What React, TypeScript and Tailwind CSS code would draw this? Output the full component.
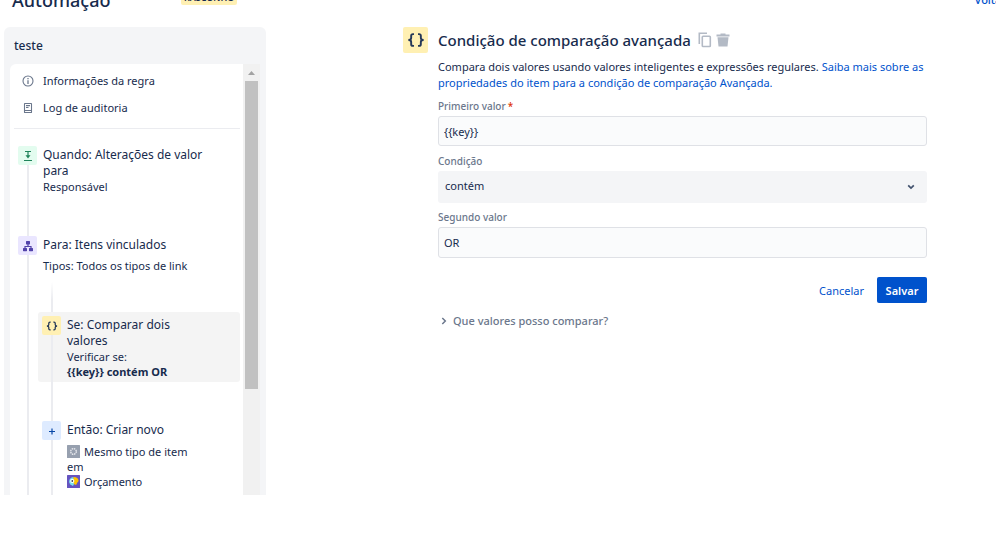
import { useState, type ReactNode } from 'react';

function BracesIcon({ className }: { className: string }) {
  return (
    <svg viewBox="0 0 16 16" className={className} fill="none" stroke="#253858" strokeWidth="1.7" aria-hidden="true">
      <path d="M6.200 2.800H5.300Q3.700 2.800 3.700 4.300V6.300Q3.700 8 1.200 8Q3.700 8 3.700 9.700V11.700Q3.700 13.200 5.300 13.200H6.200" />
      <path d="M9.800 2.800H10.700Q12.300 2.800 12.300 4.300V6.300Q12.300 8 14.800 8Q12.300 8 12.300 9.700V11.700Q12.300 13.200 10.700 13.200H9.800" />
    </svg>
  );
}

function InfoIcon() {
  return (
    <svg viewBox="0 0 12 12" className="size-3" fill="none" stroke="#6b778c" strokeWidth="1.1" aria-hidden="true">
      <circle cx="6" cy="6" r="5" />
      <path d="M6 5.300V9M6 3V4.300" strokeWidth="1.300" />
    </svg>
  );
}

function LogIcon() {
  return (
    <svg viewBox="0 0 12 12" className="size-3" fill="none" stroke="#6b778c" strokeWidth="1.1" aria-hidden="true">
      <rect x="2.500" y="1.500" width="7" height="9" rx="0.300" />
      <path d="M2.500 8.500H9.500M4 3.600H8M4 5.500H6.500" />
    </svg>
  );
}

function FieldChangeIcon() {
  return (
    <svg viewBox="0 0 12 12" className="size-3" fill="none" stroke="#1f845a" strokeWidth="1.200" aria-hidden="true">
      <path d="M3 1.500H9M2 10.500H10M6 1.500V7" />
      <path d="M3.500 5.300H8.500L6 8.500Z" fill="#1f845a" stroke="none" />
    </svg>
  );
}

function BranchIcon() {
  return (
    <svg viewBox="0 0 12 12" className="size-3" fill="none" stroke="#5243aa" strokeWidth="1.200" aria-hidden="true">
      <path d="M6 4V6.500M3 9V6.500H9V9" />
      <g fill="#5243aa" stroke="none">
        <rect x="4" y="1" width="4" height="3.400" rx="0.600" />
        <rect x="1" y="8" width="4" height="3.200" rx="0.600" />
        <rect x="7" y="8" width="4" height="3.200" rx="0.600" />
      </g>
    </svg>
  );
}

function PlusIcon() {
  return (
    <svg viewBox="0 0 12 12" className="size-3" stroke="#0747a6" strokeWidth="1.200" aria-hidden="true">
      <path d="M3 6.500H9M6 3.500V9.500" />
    </svg>
  );
}

function IssueTypeIcon() {
  return (
    <svg viewBox="0 0 13 13" className="size-[13px] shrink-0" aria-hidden="true">
      <rect width="13" height="13" rx="0.500" fill="#97a0af" />
      <circle cx="6.500" cy="6.500" r="2.800" fill="none" stroke="#ebecf0" strokeWidth="1.300" strokeDasharray="1.500 0.700" />
    </svg>
  );
}

function ProjectIcon() {
  return (
    <svg viewBox="0 0 13 13" className="size-[13px] shrink-0" aria-hidden="true">
      <rect width="13" height="13" rx="0.500" fill="#6554c0" />
      <path d="M6.500 2A4.500 4.500 0 0 0 3.200 9.500L6 11L7.500 8Z" fill="#79e2f2" />
      <path d="M6.500 2Q11.300 2 11.600 6Q10 7.500 9.300 9.800Q6.500 10 6.500 7Z" fill="#ffc400" />
      <circle cx="5.300" cy="6" r="2.100" fill="#fff" />
      <circle cx="5.300" cy="6" r="0.900" fill="#344563" />
    </svg>
  );
}

interface StepProps {
  icon: ReactNode;
  tone: string;
  title: string;
  className?: string;
  children: ReactNode;
}

function Step({ icon, tone, title, className = '', children }: StepProps) {
  return (
    <div className={`flex gap-px ${className}`}>
      <div className="flex w-[19px] shrink-0 flex-col">
        <span className={`flex size-[19px] items-center justify-center rounded-[2px] ${tone}`}>{icon}</span>
        <span className="ml-[9px] w-[2px] flex-1 bg-[#ebecf0]" />
      </div>
      <div className="min-w-0 flex-1 pt-px">
        <h3 className="max-w-[175px] pl-[5px] text-[12px] leading-4">{title}</h3>
        {children}
      </div>
    </div>
  );
}

function RulePanel() {
  return (
    <aside className="w-[262px] shrink-0 rounded-t-md bg-[#f4f5f7] px-[6px]">
      <h2 className="px-1 pt-[10px] pb-[9px] text-[12px] leading-[18px] font-medium">teste</h2>
      <div className="flex overflow-hidden rounded-tl-md bg-white">
        <div className="min-w-0 flex-1 pt-[3px]">
          <nav className="mr-[3px] ml-1 border-b border-[#ebecf0] pb-[7px]">
            <a href="#info" className="flex h-[27px] items-center gap-[9px] pl-2">
              <InfoIcon />
              Informações da regra
            </a>
            <a href="#audit" className="flex h-[27px] items-center gap-[9px] pl-2">
              <LogIcon />
              Log de auditoria
            </a>
          </nav>

          <div className="pt-[17px] pr-[3px] pl-2">
            <Step icon={<FieldChangeIcon />} tone="bg-[#e3fcef]" title="Quando: Alterações de valor para">
              <p className="pb-[42px] pl-[5px]">Responsável</p>
            </Step>

            <Step icon={<BranchIcon />} tone="bg-[#eae6ff]" title="Para: Itens vinculados">
              <p className="pt-[5px] pb-[9px] pl-[5px]">Tipos: Todos os tipos de link</p>
              <div className="ml-[13px] h-[30px] w-[2px] bg-linear-to-b from-white to-[#ebecf0] to-60%" />
              <Step
                icon={<BracesIcon className="size-3" />}
                tone="bg-[#fff0b3]"
                title="Se: Comparar dois valores"
                className="rounded-[3px] bg-[#f4f4f4] pt-1 pl-1 *:last:max-w-[140px]"
              >
                <div className="pb-[3px] pl-[5px]">
                  <p>Verificar se:</p>
                  <p className="font-bold">{'{{key}} contém OR'}</p>
                </div>
              </Step>
              <div className="ml-[13px] h-[39px] w-[2px] bg-[#ebecf0]" />
              <Step icon={<PlusIcon />} tone="bg-[#deebff]" title="Então: Criar novo" className="pl-1">
                <div className="pt-[6px] pb-[6px] pl-[5px]">
                  <p className="flex items-center gap-1">
                    <IssueTypeIcon />
                    Mesmo tipo de item
                  </p>
                  <p>em</p>
                  <p className="flex items-center gap-1">
                    <ProjectIcon />
                    Orçamento
                  </p>
                </div>
              </Step>
            </Step>
          </div>
        </div>

        <div className="flex w-[17px] flex-col items-center bg-[#f1f1f1]" aria-hidden="true">
          <span className="flex h-[17px] items-center">
            <svg viewBox="0 0 7 4" className="h-1 w-[7px]" fill="#a3a3a3">
              <path d="M0 4L3.500 0L7 4Z" />
            </svg>
          </span>
          <span className="h-[308px] w-[13px] bg-[#c1c1c1]" />
        </div>
      </div>
    </aside>
  );
}

const labelStyle = 'block text-[10px] leading-[15px] font-medium text-[#6b778c]';
const inputStyle = 'mt-[2px] block w-full rounded-[3px] border border-[#dfe1e6] bg-[#fafbfc] px-[5px] outline-none';

function ConditionForm() {
  const [first, setFirst] = useState('{{key}}');
  const [operator, setOperator] = useState('contém');
  const [second, setSecond] = useState('OR');

  return (
    <main className="flex min-w-0 flex-1 gap-[10px] pr-[69px] pl-[137px]">
      <span className="flex h-[26px] w-[25px] shrink-0 items-center justify-center rounded-[2px] bg-[#fff0b3]">
        <BracesIcon className="size-[18px]" />
      </span>
      <div className="min-w-0 flex-1">
        <div className="flex h-[26px] items-center">
          <h1 className="text-[15px] font-medium">Condição de comparação avançada</h1>
          <button type="button" aria-label="Duplicar" className="ml-[6px]">
            <svg viewBox="0 0 16 16" className="size-4" fill="none" stroke="#b3bac5" strokeWidth="1.600">
              <path d="M2.300 12V1.300H10" />
              <rect x="5.300" y="4.300" width="8" height="10.200" rx="0.800" />
            </svg>
          </button>
          <button type="button" aria-label="Excluir" className="ml-[2px]">
            <svg viewBox="0 0 16 16" className="size-4" fill="#b3bac5">
              <path d="M5.500 1.500H10.500V2.500H14.500V4.500H1.500V2.500H5.500ZM2.500 5.300H13.500L12.500 14.500H3.500Z" />
            </svg>
          </button>
        </div>
        <p className="mt-[6px] leading-4">
          Compara dois valores usando valores inteligentes e expressões regulares.{' '}
          <a href="#docs" className="text-[#0052cc]">
            Saiba mais sobre as propriedades do item para a condição de comparação Avançada.
          </a>
        </p>

        <form onSubmit={(e) => e.preventDefault()}>
          <label htmlFor="first" className={`mt-2 ${labelStyle}`}>
            Primeiro valor<span className="pl-[2px] text-[#de350b]">*</span>
          </label>
          <input
            id="first"
            value={first}
            onChange={(e) => setFirst(e.target.value)}
            className={`h-[30px] ${inputStyle}`}
          />

          <label htmlFor="operator" className={`mt-2 ${labelStyle}`}>
            Condição
          </label>
          <div className="relative mt-[2px]">
            <select
              id="operator"
              value={operator}
              onChange={(e) => setOperator(e.target.value)}
              className="block h-8 w-full appearance-none rounded-[3px] bg-[#f4f5f7] px-[7px] pb-[3px] outline-none"
            >
              <option>contém</option>
            </select>
            <svg
              viewBox="0 0 8 6"
              className="pointer-events-none absolute top-[13px] right-3 h-[6px] w-2"
              fill="none"
              stroke="#42526e"
              strokeWidth="1.700"
            >
              <path d="M1.200 1.300L4 4.100L6.800 1.300" />
            </svg>
          </div>

          <label htmlFor="second" className={`mt-[7px] ${labelStyle}`}>
            Segundo valor
          </label>
          <input
            id="second"
            value={second}
            onChange={(e) => setSecond(e.target.value)}
            className={`h-[31px] ${inputStyle}`}
          />

          <div className="mt-[19px] flex justify-end gap-[3px]">
            <button type="button" className="h-[26px] px-[10px] text-[#0052cc]">
              Cancelar
            </button>
            <button type="submit" className="h-[26px] w-[50px] rounded-[2px] bg-[#0052cc] font-semibold text-white">
              Salvar
            </button>
          </div>
        </form>

        <button type="button" className="mt-[10px] flex items-center gap-[6px] pl-[3px] font-medium text-[#6b778c]">
          <svg viewBox="0 0 6 8" className="h-2 w-[6px]" fill="none" stroke="#6b778c" strokeWidth="1.500">
            <path d="M1.300 1L4.300 4L1.300 7" />
          </svg>
          Que valores posso comparar?
        </button>
      </div>
    </main>
  );
}

export default function App() {
  return (
    <div className="min-h-screen overflow-hidden bg-white font-['Noto_Sans',sans-serif] text-[11px] leading-[15px] text-[#172b4d]">
      <header className="-mt-3 flex h-[39px] items-start pl-3">
        <p className="w-[169px] text-[18px] leading-6 font-medium">Automação</p>
        <span className="rounded-[2px] bg-[#fff0b3] px-[3px] pt-1 pb-px text-[9px] leading-3 font-semibold">RASCUNHO</span>
        <a href="#list" className="-mr-[10px] ml-auto pt-1 font-medium text-[#0052cc]">
          Voltar
        </a>
      </header>
      <div className="flex items-start pl-1">
        <RulePanel />
        <ConditionForm />
      </div>
    </div>
  );
}
